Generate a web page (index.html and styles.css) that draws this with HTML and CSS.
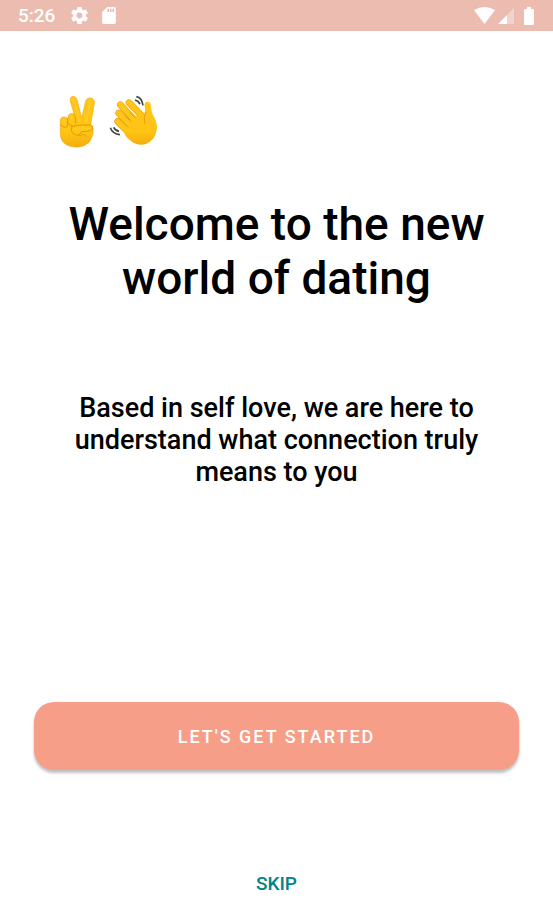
FILE: index.html
```html
<!DOCTYPE html>
<html lang="en">
<head>
<meta charset="utf-8">
<meta name="viewport" content="width=device-width, initial-scale=1">
<title>Welcome</title>
<link rel="stylesheet" href="styles.css">
</head>
<body>
<header class="status-bar">
  <div class="status-group">
    <time class="clock">5:26</time>
    <svg class="gear" viewBox="2 2 20 20" aria-hidden="true"><path d="M19.43 12.98c.04-.32.07-.64.07-.98s-.03-.66-.07-.98l2.11-1.65c.19-.15.24-.42.12-.64l-2-3.46c-.12-.22-.39-.3-.61-.22l-2.49 1c-.52-.4-1.08-.73-1.69-.98l-.38-2.65C14.46 2.18 14.25 2 14 2h-4c-.25 0-.46.18-.49.42l-.38 2.65c-.61.25-1.17.59-1.69.98l-2.49-1c-.23-.09-.49 0-.61.22l-2 3.46c-.13.22-.07.49.12.64l2.11 1.65c-.04.32-.07.65-.07.98s.03.66.07.98l-2.11 1.65c-.19.15-.24.42-.12.64l2 3.46c.12.22.39.3.61.22l2.49-1c.52.4 1.08.73 1.69.98l.38 2.65c.03.24.24.42.49.42h4c.25 0 .46-.18.49-.42l.38-2.65c.61-.25 1.17-.59 1.69-.98l2.49 1c.23.09.49 0 .61-.22l2-3.46c.12-.22.07-.49-.12-.64l-2.11-1.65zM12 15.5c-1.93 0-3.5-1.57-3.5-3.5s1.57-3.5 3.5-3.5 3.5 1.57 3.5 3.5-1.57 3.5-3.5 3.5z"/></svg>
    <svg class="sd-card" viewBox="4 2 16 20" aria-hidden="true"><path d="M18 2h-8L4 8v12c0 1.100.9 2 2 2h12c1.100 0 2-.9 2-2V4c0-1.100-.9-2-2-2zm-6 6h-2V4h2v4zm3 0h-2V4h2v4zm3 0h-2V4h2v4z"/></svg>
  </div>
  <div class="status-group">
    <svg class="wifi" viewBox="0 0 21 17" aria-hidden="true"><path d="M0 3Q10.500-3 21 3L10.500 17z"/></svg>
    <svg class="signal" viewBox="0 0 16 16" aria-hidden="true"><path opacity=".35" d="M9 7l7-7v16H9z"/><path d="M0 16l9-9v9z"/></svg>
    <svg class="battery" viewBox="0 0 10 18" aria-hidden="true"><path d="M3 0h4v2h2q1 0 1 1v14q0 1-1 1H1q-1 0-1-1V3q0-1 1-1h2z"/></svg>
  </div>
</header>
<main class="welcome">
  <div class="hands">
    <svg class="victory" viewBox="27 27 108 168" role="img" aria-label="Victory hand">
      <defs>
        <linearGradient id="skin" x1="0" y1="0" x2="0" y2="1"><stop offset="0" stop-color="#ffc61a"/><stop offset=".7" stop-color="#ffc414"/><stop offset="1" stop-color="#f5ad0c"/></linearGradient>
      </defs>
      <path d="M31 113C30 101 34 96 42 96C48 96 52 99 54 102L54 96C55 82 75 82 76 96L77 104L61 48C57 32 77 29 81 44L95 99L107 49C110 34 135 36 133 54L122 119C132 124 131 144 125 158C117 178 99 187 76 186C48 185 32 170 31 148Z" fill="url(#skin)" stroke="#f0a70c" stroke-width="2"/>
      <path d="M53 101V119Q51 128 44 127Q35 126 31 118M54 115Q58 124 66 122M77 99V114M66 125Q74 119 121 120Q130 122 128 131Q125 140 96 140Q89 143 87 151M66 125Q61 133 66 142Q74 151 87 151M90 153Q98 146 103 149L110 156" fill="none" stroke="#e59a0a" stroke-width="3" stroke-linecap="round"/>
      <path d="M71 44L88 108M121 49L107 110M42 106V116M65 94V111M76 131Q98 127 115 130" fill="none" stroke="#ffd02b" stroke-width="6" stroke-linecap="round" opacity=".7"/>
    </svg>
    <svg class="wave" viewBox="27 27 150 168" role="img" aria-label="Waving hand">
      <path d="M87 53L132 99M61 59L112 114M56 84L102 132M53 109L95 151" fill="none" stroke="#e8a00b" stroke-width="20" stroke-linecap="round"/>
      <path d="M87 53L132 99M61 59L112 114M56 84L102 132M53 109L95 151" fill="none" stroke="#ffc61a" stroke-width="16" stroke-linecap="round"/>
      <path d="M100 91L128 96Q138 84 134 63C131 48 149 46 152 58L155 78C157 91 171 106 171 125C171 157 149 179 123 179C103 179 92 169 77 153L69 135Z" fill="url(#skin)"/>
      <path d="M88 81L106 99M77 93L94 111M70 112L84 126M137 82Q130 96 134 116" fill="none" stroke="#e8a00b" stroke-width="3" stroke-linecap="round"/>
      <path d="M109 35Q126 38 129 61M105 45Q117 48 120 58M31 128Q38 147 60 149M41 127Q46 137 57 139" fill="none" stroke="#434448" stroke-width="5"/>
    </svg>
  </div>
  <h1 class="title">Welcome to the new world of dating</h1>
  <p class="intro">Based in self love, we are here to understand what connection truly means to you</p>
  <div class="actions">
    <button class="start" type="button">LET'S GET STARTED</button>
    <button class="skip" type="button">SKIP</button>
  </div>
</main>
</body>
</html>
```
FILE: styles.css
```css
* { box-sizing: border-box; }
body {
  margin: 0;
  min-height: 100vh;
  display: flex;
  flex-direction: column;
  background: #fff;
  color: #000;
  font-family: Roboto, "Liberation Sans", sans-serif;
  font-weight: 500;
}
.status-bar {
  display: flex;
  justify-content: space-between;
  align-items: center;
  height: 31px;
  padding: 0 19px 0 18px;
  background: #ecbcb1;
  color: #fff;
}
.status-group { display: flex; align-items: center; }
.status-group svg { fill: currentColor; }
.clock { font-size: 19px; line-height: 31px; margin-right: 16px; }
.gear { width: 17px; height: 17px; margin-right: 14px; }
.sd-card { width: 14px; height: 17px; }
.wifi { width: 21px; height: 17px; margin-right: 3px; }
.signal { width: 16px; height: 16px; margin-right: 10px; }
.battery { width: 10px; height: 18px; }
.welcome {
  flex: 1;
  display: flex;
  flex-direction: column;
  padding: 63px 34px 20px;
}
.hands { display: flex; gap: 14px; padding-left: 25px; }
.victory { width: 36px; height: 56px; }
.wave { width: 50px; height: 56px; }
.title {
  margin: 47px 24px 0;
  font-size: 46px;
  line-height: 54px;
  font-weight: 500;
  text-align: center;
}
.intro {
  margin: 87px 32px 48px;
  font-size: 27px;
  line-height: 32px;
  text-align: center;
}
.actions {
  display: flex;
  flex-direction: column;
  align-items: center;
  gap: 98px;
  margin-top: auto;
}
button {
  border: 0;
  font: inherit;
  font-size: 19px;
  cursor: pointer;
}
.start {
  width: 100%;
  height: 68px;
  border-radius: 20px;
  background: #f69e87;
  color: #fff;
  font-size: 18px;
  letter-spacing: 2px;
  box-shadow: 0 3px 3px rgba(0, 0, 0, .25);
}
.skip {
  padding: 4px 8px;
  background: none;
  color: #00838a;
  line-height: 24px;
}
```
